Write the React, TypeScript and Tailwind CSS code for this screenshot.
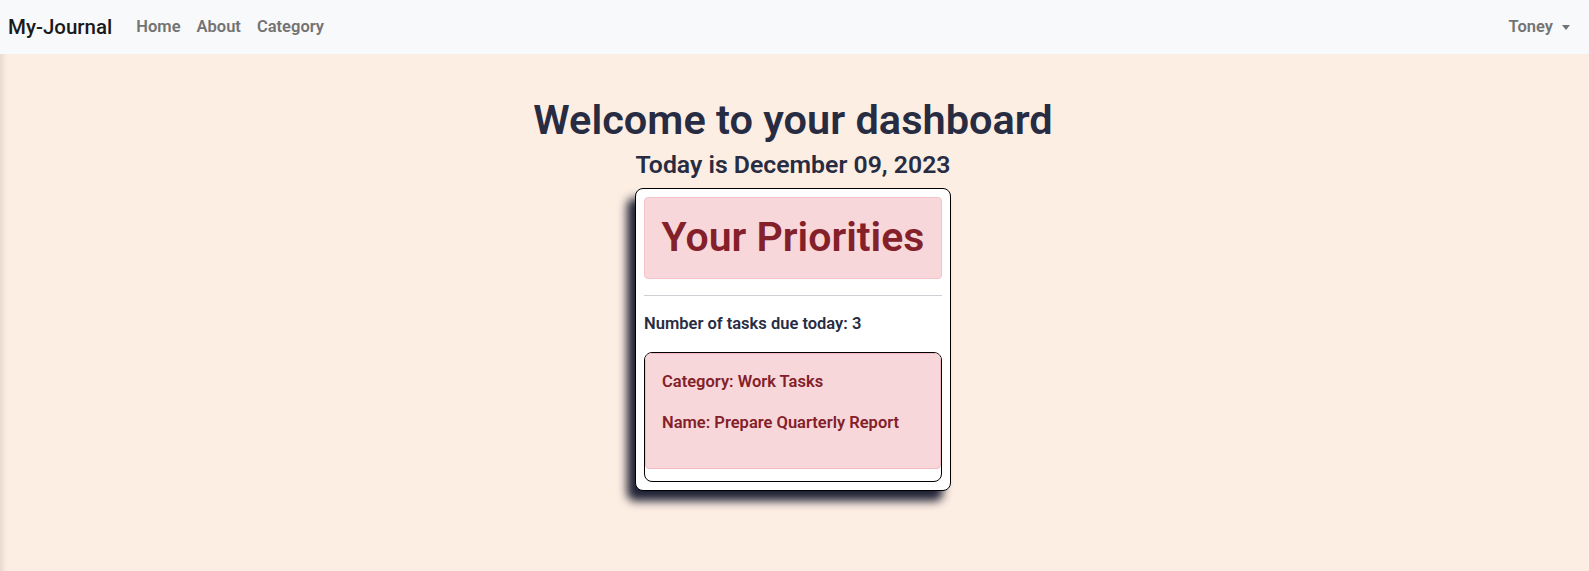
import React from 'react'

const font = { fontFamily: 'Roboto, "Noto Sans", sans-serif' }

function Navbar() {
  return (
    <nav className="flex h-[54px] items-center justify-between bg-[#f8f9fa] px-2">
      <div className="flex items-center">
        <a className="mr-4 text-[20.5px] font-medium text-[#1a1a1a]">My-Journal</a>
        <ul className="flex items-center text-[16.5px]">
          <li><a className="px-2 font-semibold text-[#737373]">Home</a></li>
          <li><a className="px-2 font-semibold text-[#737373]">About</a></li>
          <li><a className="px-2 font-semibold text-[#737373]">Category</a></li>
        </ul>
      </div>
      <div className="flex items-center pr-[11px] text-[16.5px] font-semibold text-[#737373]">
        Toney
        <span className="ml-[9px] inline-block border-x-[4px] border-t-[5px] border-x-transparent border-t-[#737373]" />
      </div>
    </nav>
  )
}

export default function App() {
  const task = { category: 'Work Tasks', name: 'Prepare Quarterly Report' }

  return (
    <div style={font} className="flex min-h-screen flex-col bg-[#fdeee3]">
      <Navbar />
      <main className="flex flex-1 flex-col items-center pt-[42px] pr-[3px] text-[16.5px] text-[#272c42] shadow-[inset_7px_0_6px_-5px_rgba(0,0,0,0.12)]">
        <h1 className="text-[41.5px] leading-[1.15] font-semibold">Welcome to your dashboard</h1>
        <h2 className="mt-[6px] text-[24.8px] leading-[1.2] font-semibold">Today is December 09, 2023</h2>

        <div className="mt-[9px] w-[316px] rounded-lg border border-black bg-white p-2 shadow-[-8px_10px_10px_#1f2235]">
          <div className="rounded border border-[#f5c2c7] bg-[#f8d7da] px-3 py-[15px] text-center">
            <h1 className="text-[41px] leading-[1.2] font-semibold text-[#842029]">Your Priorities</h1>
          </div>
          <hr className="my-4 border-[#cfcfd6]" />
          <p className="font-semibold">Number of tasks due today: 3</p>
          <div className="mt-4 overflow-hidden rounded-lg border border-black pb-3">
            <div className="rounded-b border border-[#f1b9c0] bg-[#f8d7da] p-4 font-semibold text-[#842029]">
              <p className="mb-4">Category: {task.category}</p>
              <p className="mb-4">Name: {task.name}</p>
            </div>
          </div>
        </div>
      </main>
    </div>
  )
}
